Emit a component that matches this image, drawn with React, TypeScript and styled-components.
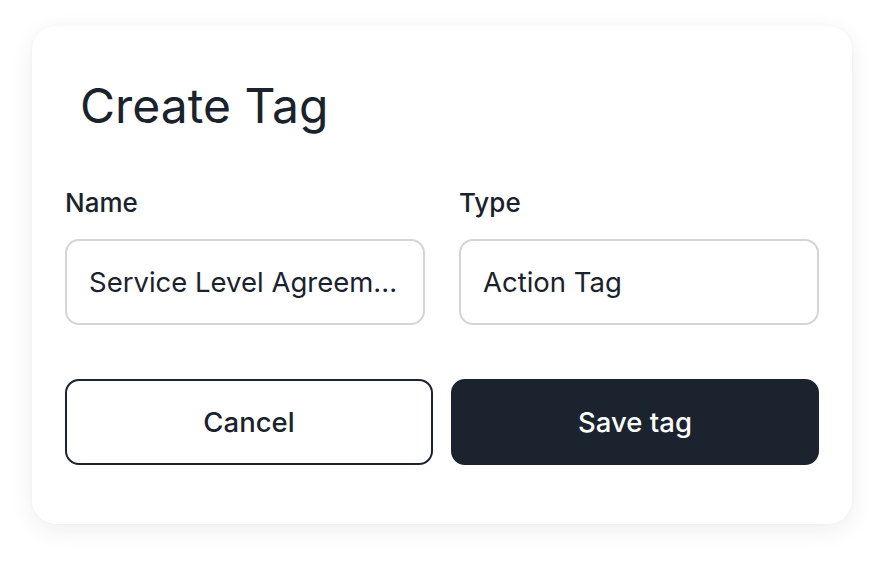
import styled, { createGlobalStyle } from "styled-components";

const GlobalStyle = createGlobalStyle`
  html, body {
    margin: 0;
    padding: 0;
    background: #ffffff;
  }
  body {
    font-family: Inter, "Noto Sans", sans-serif;
    color: #1a222c;
  }
`;

const Page = styled.div`
  width: 884px;
  height: 564px;
  padding: 26px 32px 0;
  box-sizing: border-box;
`;

const Card = styled.div`
  width: 820px;
  height: 498px;
  box-sizing: border-box;
  background: #ffffff;
  border-radius: 24px;
  box-shadow: 0 6px 24px rgba(20, 30, 40, 0.07), 0 0 4px rgba(20, 30, 40, 0.03);
  padding: 0 33px;
  display: flex;
  flex-direction: column;
`;

const Title = styled.h1`
  margin: 52px 0 0 15px;
  font-size: 48px;
  line-height: 56px;
  font-weight: 400;
  color: #1a222c;
`;

const Fields = styled.div`
  display: grid;
  grid-template-columns: 1fr 1fr;
  column-gap: 34px;
  margin-top: 54px;
`;

const Field = styled.div`
  display: flex;
  flex-direction: column;
`;

const Label = styled.label`
  font-size: 26px;
  line-height: 30px;
  font-weight: 500;
  color: #1a222c;
  margin-bottom: 21px;
`;

const Input = styled.div`
  height: 86px;
  box-sizing: border-box;
  border: 2px solid #d4d5d7;
  border-radius: 14px;
  padding: 0 22px;
  display: flex;
  align-items: center;
  font-size: 27.5px;
  color: #1a222c;
  white-space: nowrap;
  overflow: hidden;
`;

const Actions = styled.div`
  display: grid;
  grid-template-columns: 1fr 1fr;
  column-gap: 18px;
  margin-top: 54px;
`;

const Button = styled.button<{ $primary?: boolean }>`
  height: 86px;
  border-radius: 14px;
  font-family: Inter, "Noto Sans", sans-serif;
  font-size: 27.5px;
  font-weight: 500;
  cursor: pointer;
  border: 2px solid #1b242e;
  background: ${(p) => (p.$primary ? "#1b242e" : "#ffffff")};
  color: ${(p) => (p.$primary ? "#ffffff" : "#1a222c")};
`;

const App = () => (
  <>
    <GlobalStyle />
    <Page>
      <Card>
        <Title>Create Tag</Title>
        <Fields>
          <Field>
            <Label>Name</Label>
            <Input>Service Level Agreem...</Input>
          </Field>
          <Field>
            <Label>Type</Label>
            <Input>Action Tag</Input>
          </Field>
        </Fields>
        <Actions>
          <Button>Cancel</Button>
          <Button $primary>Save tag</Button>
        </Actions>
      </Card>
    </Page>
  </>
);

export default App;
